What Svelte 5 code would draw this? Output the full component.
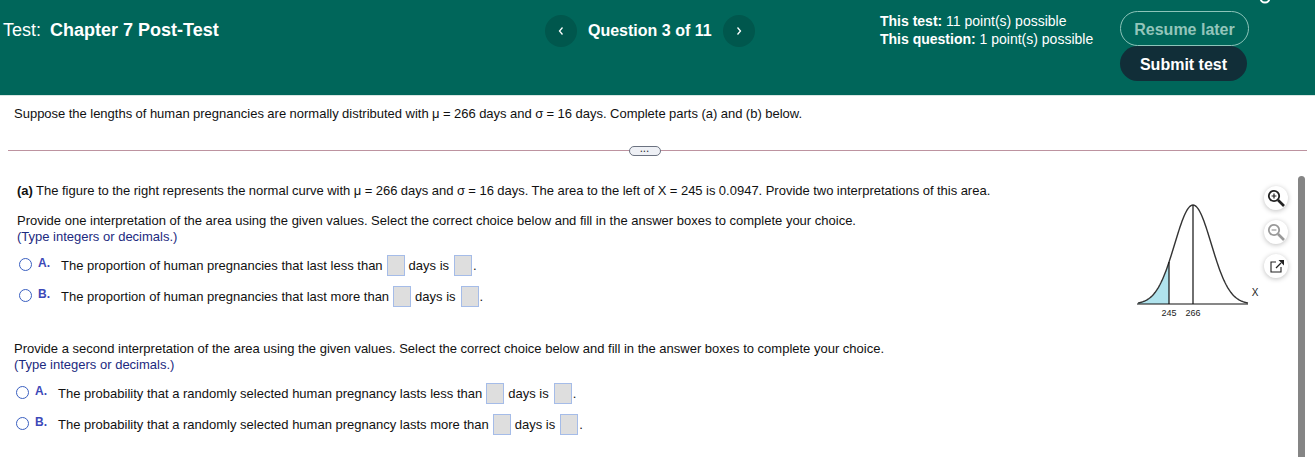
<script>
	const parts = [
		{
			intro: 'Provide one interpretation of the area using the given values. Select the correct choice below and fill in the answer boxes to complete your choice.',
			choices: [
				['A.', 'The proportion of human pregnancies that last less than'],
				['B.', 'The proportion of human pregnancies that last more than']
			]
		},
		{
			intro: 'Provide a second interpretation of the area using the given values. Select the correct choice below and fill in the answer boxes to complete your choice.',
			choices: [
				['A.', 'The probability that a randomly selected human pregnancy lasts less than'],
				['B.', 'The probability that a randomly selected human pregnancy lasts more than']
			]
		}
	];

	// normal curve in svg units: baseline y=102, peak y=3, mean x=56
	const sigma = 18.3;
	const yAt = (x) => 102 - 99 * Math.exp(-((x - 56) ** 2) / (2 * sigma * sigma));
	const line = (from, to) => {
		let d = '';
		for (let x = from; x <= to; x += 1) d += `${d ? 'L' : 'M'}${x} ${yAt(x).toFixed(2)}`;
		return d;
	};
	const curve = line(1, 111);
	const shade = `${line(1, 32)}L32 102L1 102Z`;
</script>

{#snippet blank()}
	<span class="blank"></span>
{/snippet}

{#snippet question(part)}
	<p>{part.intro}</p>
	<p class="hint">(Type integers or decimals.)</p>
	<ul>
		{#each part.choices as [letter, text]}
			<li>
				<span class="radio"></span>
				<b>{letter}</b>
				<span class="text">{text}</span>
				{@render blank()}
				<span class="days">days is</span>
				{@render blank()}
				<span class="dot">.</span>
			</li>
		{/each}
	</ul>
{/snippet}

<header>
	<div class="title"><span>Test:</span><strong>Chapter 7 Post-Test</strong></div>
	<nav>
		<button aria-label="Previous question">
			<svg width="8" height="10" viewBox="0 0 8 10"><path d="M5.5 1.5 2.5 5l3 3.5" /></svg>
		</button>
		<strong>Question 3 of 11</strong>
		<button aria-label="Next question">
			<svg width="8" height="10" viewBox="0 0 8 10"><path d="M2.5 1.5 5.5 5l-3 3.5" /></svg>
		</button>
	</nav>
	<div class="points">
		<div><strong>This test:</strong> 11 point(s) possible</div>
		<div><strong>This question:</strong> 1 point(s) possible</div>
	</div>
	<div class="actions">
		<button class="resume">Resume later</button>
		<button class="submit">Submit test</button>
	</div>
	<svg class="gear" width="16" height="5" viewBox="0 0 16 5">
		<circle cx="8" cy="-2" r="4.5" />
	</svg>
</header>

<main>
	<p class="lead">Suppose the lengths of human pregnancies are normally distributed with μ = 266 days and σ = 16 days. Complete parts (a) and (b) below.</p>

	<div class="divider"><span>• • •</span></div>

	<section class="first">
		<div class="col">
			<p class="part-a"><strong>(a)</strong> The figure to the right represents the normal curve with μ = 266 days and σ = 16 days. The area to the left of X = 245 is 0.0947. Provide two interpretations of this area.</p>
			{@render question(parts[0])}
		</div>

		<svg class="figure" width="122" height="114" viewBox="0 0 122 114">
			<path class="shade" d={shade} />
			<path class="curve" d={curve} />
			<path class="axis" d="M0 102H111M32 {yAt(32).toFixed(1)}V102M56 3V102" />
			<text x="32" y="114" text-anchor="middle">245</text>
			<text x="56" y="114" text-anchor="middle">266</text>
			<text class="x" x="118" y="94" text-anchor="middle">X</text>
		</svg>

		<div class="tools">
			<span class="tool">
				<svg width="20" height="20" viewBox="0 0 20 20">
					<circle cx="8" cy="8" r="5.2" stroke-width="1.8" />
					<path d="M12 12 18 18" stroke-width="2.6" />
					<path d="M5.6 8h4.8M8 5.6v4.8" stroke-width="1.2" />
				</svg>
			</span>
			<span class="tool off">
				<svg width="20" height="20" viewBox="0 0 20 20">
					<circle cx="8" cy="8" r="5.2" stroke-width="1.8" />
					<path d="M12 12 18 18" stroke-width="2.6" />
					<path d="M5.6 8h4.8" stroke-width="1.2" />
				</svg>
			</span>
			<span class="tool">
				<svg width="18" height="18" viewBox="0 0 18 18">
					<path d="M9 5H4v10h10v-5" stroke-width="1.1" />
					<path d="M9 11l5-5" stroke-width="1.3" />
					<path class="fill" d="M11.5 3H17v5.5z" />
				</svg>
			</span>
		</div>
	</section>

	<section class="second">
		{@render question(parts[1])}
	</section>

	<div class="scrollbar"></div>
</main>

<style>
	:global(body) {
		margin: 0;
		background: #fff;
		font-family: 'Liberation Sans', Arial, sans-serif;
	}

	p {
		margin: 0;
	}

	/* Header */
	header {
		position: relative;
		display: flex;
		align-items: flex-start;
		box-sizing: border-box;
		height: 96px;
		padding: 11px 0 0 3px;
		background: #00665a;
		border-bottom: 1px solid #d8e6e3;
		color: #fff;
	}

	.title {
		display: flex;
		gap: 9px;
		width: 542px;
		margin-top: 8px;
		font-size: 18px;
		line-height: 22px;
	}

	nav {
		display: flex;
		align-items: center;
		gap: 11px;
		width: 335px;
		margin-top: 4px;
		font-size: 16px;
	}

	nav button {
		display: grid;
		place-items: center;
		width: 32px;
		height: 32px;
		padding: 0;
		border: 0;
		border-radius: 50%;
		background: #00574d;
	}

	nav path {
		fill: none;
		stroke: #fff;
		stroke-width: 1.3;
	}

	.points {
		width: 240px;
		margin-top: 1px;
		font-size: 14px;
		line-height: 18px;
	}

	.actions {
		display: flex;
		flex-direction: column;
		align-items: flex-start;
	}

	.actions button {
		height: 35px;
		padding: 2px 0 0;
		border-radius: 18px;
		font: bold 16px 'Liberation Sans', Arial, sans-serif;
	}

	.resume {
		width: 129px;
		border: 1px solid #8cc4b9;
		background: transparent;
		color: #93c5bb;
	}

	.submit {
		width: 127px;
		border: 0;
		background: #112e38;
		color: #fff;
	}

	.gear {
		position: absolute;
		top: 0;
		left: 1257px;
	}

	.gear circle {
		fill: none;
		stroke: #fff;
		stroke-width: 2;
	}

	/* Body */
	main {
		position: relative;
		box-sizing: border-box;
		height: 361px;
		overflow: hidden;
		color: #111;
		font-size: 13px;
		line-height: 16px;
	}

	.lead {
		padding: 10px 0 0 14px;
		word-spacing: -0.18px;
	}

	.divider {
		display: flex;
		justify-content: center;
		align-items: center;
		height: 1px;
		margin: 28px 8px 0;
		background: #bd93a0;
	}

	.divider span {
		position: relative;
		left: -13px;
		box-sizing: border-box;
		width: 32px;
		height: 10px;
		border: 1px solid #6b7280;
		border-radius: 5px;
		background: #eef0f5;
		color: #333;
		font-size: 5px;
		line-height: 8px;
		text-align: center;
	}

	.first {
		display: flex;
		padding: 32px 0 0 17px;
	}

	.col {
		width: 1120px;
	}

	.part-a {
		margin-bottom: 14px;
		word-spacing: -0.17px;
	}

	.hint {
		color: #1c2a80;
	}

	ul {
		margin: 9px 0 0;
		padding: 0;
		list-style: none;
	}

	li {
		display: flex;
		align-items: center;
		height: 23px;
		margin-bottom: 8px;
	}

	.radio {
		box-sizing: border-box;
		width: 13px;
		height: 13px;
		margin: -2px 0 0 2px;
		border: 1.3px solid #3a5fc0;
		border-radius: 50%;
	}

	li b {
		width: 23px;
		margin: -5px 0 0 6px;
		color: #3c48b8;
		font-size: 12px;
	}

	.blank {
		box-sizing: border-box;
		width: 18px;
		height: 21px;
		margin: 0 4px;
		border: 1px solid #a5bce8;
		background: #dedede;
	}

	.days {
		margin-right: 1px;
	}

	.dot {
		margin-left: -3px;
	}

	.figure {
		flex: none;
		margin-top: 19px;
		overflow: visible;
	}

	.shade {
		fill: #b0e3ed;
	}

	.curve {
		fill: none;
		stroke: #333;
		stroke-width: 1.4;
	}

	.axis {
		fill: none;
		stroke: #111;
		stroke-width: 1.2;
	}

	.figure text {
		font-family: 'Liberation Sans', Arial, sans-serif;
		font-size: 9px;
		fill: #222;
	}

	.figure text.x {
		font-size: 10px;
	}

	.tools {
		display: flex;
		flex-direction: column;
		gap: 10px;
		margin: 3px 0 0 5px;
	}

	.tool {
		display: grid;
		place-items: center;
		width: 24px;
		height: 24px;
		border-radius: 50%;
		background: #fff;
		box-shadow: 0 1px 5px rgba(0, 0, 0, 0.25);
	}

	.tool svg {
		fill: none;
		stroke: #222;
	}

	.tool .fill {
		fill: #222;
		stroke: none;
	}

	.tool.off svg {
		stroke: #999;
	}

	.second {
		margin-top: 25px;
		padding-left: 14px;
	}

	.scrollbar {
		position: absolute;
		top: 80px;
		bottom: 0;
		left: 1298px;
		width: 7px;
		border-radius: 4px 4px 0 0;
		background: #858585;
	}
</style>
